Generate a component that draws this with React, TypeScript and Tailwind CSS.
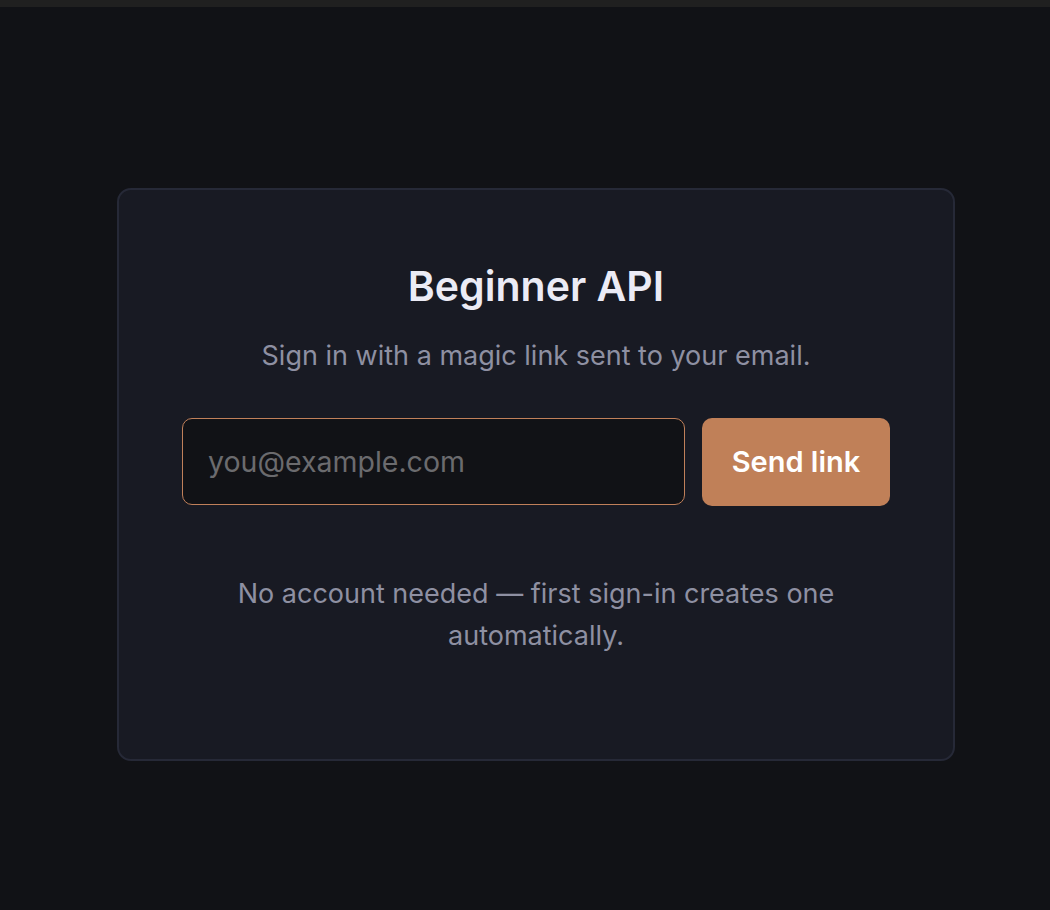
export default function App() {
  return (
    <div
      className="min-h-screen bg-[#111216]"
      style={{ fontFamily: "Inter, 'Noto Sans', sans-serif" }}
    >
      <div className="h-[7px] bg-[#202020]" />
      <div className="pl-[117px] pt-[181px]">
        <div className="flex h-[573px] w-[838px] flex-col items-center rounded-[14px] border-2 border-[#262937] bg-[#181a23] px-[63px] pt-[72px] text-center">
          <h1 className="text-[41px] leading-[48px] font-semibold text-[#ebebf5]">
            Beginner API
          </h1>
          <p className="mt-[30px] text-[27px] leading-[32px] text-[#8e90a2]">
            Sign in with a magic link sent to your email.
          </p>
          <form
            className="mt-[46px] flex w-full gap-[17px]"
            onSubmit={(e) => e.preventDefault()}
          >
            <input
              type="email"
              placeholder="you@example.com"
              className="h-[87px] flex-1 rounded-[10px] border-[1.5px] border-[#c0805a] bg-[#111216] px-[25px] text-[28.5px] text-[#ebebf5] outline-none placeholder:text-[#6b6b6e]"
            />
            <button
              type="submit"
              className="h-[88px] w-[188px] rounded-[10px] bg-[#c08058] text-[29px] font-semibold text-white"
            >
              Send link
            </button>
          </form>
          <p className="mt-[67px] text-[27px] leading-[42px] text-[#8e90a2]">
            No account needed — first sign-in creates one automatically.
          </p>
        </div>
      </div>
    </div>
  );
}
